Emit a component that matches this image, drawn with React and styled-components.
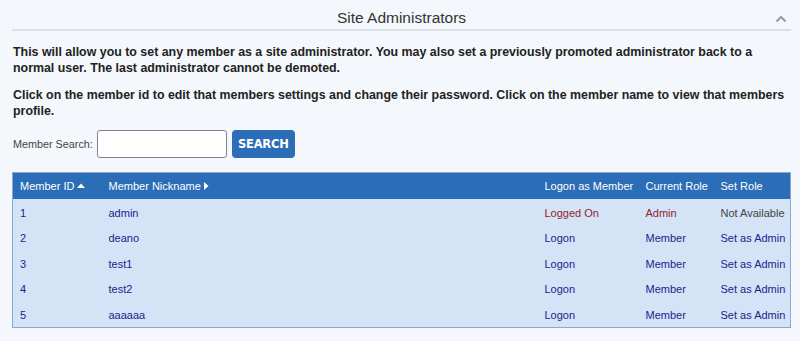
import React from "react";
import styled, { createGlobalStyle } from "styled-components";

const Global = createGlobalStyle`
  html, body { margin: 0; padding: 0; background: #f4f7fb; }
  body { font-family: "Liberation Sans", Arial, sans-serif; color: #333; }
`;

const Page = styled.div`
  width: 800px;
  height: 341px;
  box-sizing: border-box;
  padding: 0 9px 0 12px;
  background: #f4f7fb;
  overflow: hidden;
`;

const Header = styled.div`
  position: relative;
  box-sizing: border-box;
  height: 31px;
  padding-top: 9px;
  border-bottom: 2px solid #dde1e7;
  text-align: center;
`;

const Title = styled.h1`
  margin: 0;
  font-size: 15.5px;
  line-height: 18px;
  font-weight: normal;
  color: #333;
`;

const Collapse = styled.svg`
  position: absolute;
  right: 4px;
  top: 15px;
`;

const Intro = styled.p`
  margin: ${(p) => (p.$first ? "13px" : "11px")} 0 0 1px;
  font-size: 12.4px;
  line-height: 16px;
  font-weight: bold;
  color: #222;
`;

const SearchRow = styled.div`
  display: flex;
  align-items: center;
  gap: 4px;
  margin: 11px 0 14px 1px;
  height: 28px;
`;

const Label = styled.label`
  font-size: 10.8px;
  color: #444;
`;

const Input = styled.input`
  box-sizing: border-box;
  width: 130px;
  height: 28px;
  border: 1px solid #7d8591;
  border-radius: 3px;
  background: #fff;
  margin: 0;
`;

const Button = styled.button`
  box-sizing: border-box;
  margin-left: 1px;
  width: 63px;
  height: 28px;
  border: none;
  border-radius: 4px;
  background: #2c6db8;
  color: #fff;
  font-family: "DejaVu Sans", Verdana, sans-serif;
  font-weight: bold;
  font-size: 11.5px;
  letter-spacing: -0.2px;
  padding: 0;
`;

const Table = styled.table`
  width: 779px;
  table-layout: fixed;
  border-collapse: collapse;
  font-size: 11px;
  border: 1px solid #86a9d6;
  background: #d4e3f5;
`;

const HeadCell = styled.th`
  height: 26px;
  padding: 0 0 0 7px;
  background: #2c6db8;
  color: #fff;
  font-weight: normal;
  text-align: left;
  white-space: nowrap;
`;

const Cell = styled.td`
  height: 23.5px;
  padding: 2px 0 0 7px;
  white-space: nowrap;
  color: ${(p) =>
    p.$tone === "red" ? "#8e1f2e" : p.$tone === "gray" ? "#444" : "#21238e"};
`;

const Arrow = styled.svg`
  margin-left: 3px;
  vertical-align: ${(p) => (p.$dir === "up" ? "2px" : "0px")};
`;

const rows = [
  { id: 1, nick: "admin", logon: "Logged On", role: "Admin", set: "Not Available", self: true },
  { id: 2, nick: "deano", logon: "Logon", role: "Member", set: "Set as Admin" },
  { id: 3, nick: "test1", logon: "Logon", role: "Member", set: "Set as Admin" },
  { id: 4, nick: "test2", logon: "Logon", role: "Member", set: "Set as Admin" },
  { id: 5, nick: "aaaaaa", logon: "Logon", role: "Member", set: "Set as Admin" },
];

export default function App() {
  return (
    <>
      <Global />
      <Page>
        <Header>
          <Title>Site Administrators</Title>
          <Collapse width="12" height="8" viewBox="0 0 12 8">
            <path d="M1.5 6.5 L6 2 L10.5 6.5" fill="none" stroke="#9a9ea6" strokeWidth="2.2" />
          </Collapse>
        </Header>
        <Intro $first>
          This will allow you to set any member as a site administrator. You may also set a previously promoted
          administrator back to a normal user. The last administrator cannot be demoted.
        </Intro>
        <Intro>
          Click on the member id to edit that members settings and change their password. Click on the member name to
          view that members profile.
        </Intro>
        <SearchRow>
          <Label>Member Search:</Label>
          <Input type="text" />
          <Button>SEARCH</Button>
        </SearchRow>
        <Table>
          <colgroup>
            <col style={{ width: 89 }} />
            <col style={{ width: 436 }} />
            <col style={{ width: 101 }} />
            <col style={{ width: 75 }} />
            <col />
          </colgroup>
          <thead>
            <tr>
              <HeadCell>
                Member ID
                <Arrow $dir="up" width="8" height="5" viewBox="0 0 8 5">
                  <path d="M0 5 L4 0.5 L8 5 Z" fill="#fff" />
                </Arrow>
              </HeadCell>
              <HeadCell>
                Member Nickname
                <Arrow $dir="right" width="5" height="8" viewBox="0 0 5 8">
                  <path d="M0 0 L4.5 4 L0 8 Z" fill="#fff" />
                </Arrow>
              </HeadCell>
              <HeadCell>Logon as Member</HeadCell>
              <HeadCell>Current Role</HeadCell>
              <HeadCell>Set Role</HeadCell>
            </tr>
          </thead>
          <tbody>
            {rows.map((r) => (
              <tr key={r.id}>
                <Cell>{r.id}</Cell>
                <Cell>{r.nick}</Cell>
                <Cell $tone={r.self ? "red" : undefined}>{r.logon}</Cell>
                <Cell $tone={r.self ? "red" : undefined}>{r.role}</Cell>
                <Cell $tone={r.self ? "gray" : undefined}>{r.set}</Cell>
              </tr>
            ))}
          </tbody>
        </Table>
      </Page>
    </>
  );
}
